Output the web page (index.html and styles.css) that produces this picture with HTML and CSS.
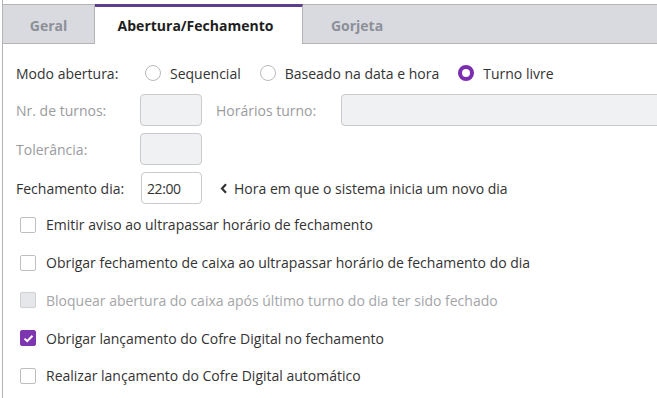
FILE: index.html
```html
<!DOCTYPE html>
<html lang="pt">
<head>
<meta charset="utf-8">
<link rel="stylesheet" href="styles.css">
</head>
<body>
<div class="frame">
  <div class="tabbar">
    <div class="tab">Geral</div>
    <div class="tab active">Abertura/Fechamento</div>
    <div class="tab last">Gorjeta</div>
  </div>
  <div class="content">
    <div class="row row-mode">
      <span class="label">Modo abertura:</span>
      <div class="radios">
        <label class="radio"><span class="dot"></span>Sequencial</label>
        <label class="radio"><span class="dot"></span>Baseado na data e hora</label>
        <label class="radio"><span class="dot checked"></span>Turno livre</label>
      </div>
    </div>
    <div class="row">
      <span class="label disabled">Nr. de turnos:</span>
      <span class="input small dis"></span>
      <span class="label disabled mid">Horários turno:</span>
      <span class="input wide dis"></span>
    </div>
    <div class="row">
      <span class="label disabled">Tolerância:</span>
      <span class="input small dis"></span>
    </div>
    <div class="row last-row">
      <span class="label">Fechamento dia:</span>
      <span class="input small val">22:00</span>
      <span class="hint"><svg class="chev" width="8" height="11" viewBox="0 0 8 11"><path d="M6 1.2 L2 5.5 L6 9.8" fill="none" stroke="#333" stroke-width="2.2"/></svg>Hora em que o sistema inicia um novo dia</span>
    </div>
    <div class="checks">
      <label class="check"><span class="box"></span>Emitir aviso ao ultrapassar horário de fechamento</label>
      <label class="check"><span class="box"></span>Obrigar fechamento de caixa ao ultrapassar horário de fechamento do dia</label>
      <label class="check disabled"><span class="box dis"></span>Bloquear abertura do caixa após último turno do dia ter sido fechado</label>
      <label class="check"><span class="box on"><svg width="11" height="9" viewBox="0 0 11 9"><path d="M1.5 4.6 L4.2 7.2 L9.5 1.8" fill="none" stroke="#fff" stroke-width="2"/></svg></span>Obrigar lançamento do Cofre Digital no fechamento</label>
      <label class="check"><span class="box"></span>Realizar lançamento do Cofre Digital automático</label>
    </div>
  </div>
</div>
</body>
</html>
```

FILE: styles.css
```css
* { box-sizing: border-box; }
html, body {
  margin: 0;
  padding: 0;
  background: #fff;
  overflow: hidden;
}
body {
  font-family: "Open Sans", "Liberation Sans", sans-serif;
  font-size: 14px;
  color: #333;
}
.frame {
  margin-left: 2px;
  border-left: 1px solid #b4b4b6;
  height: 398px;
  padding-top: 4px;
}
.tabbar {
  display: flex;
  height: 40px;
  background: #d9dadf;
  border-top: 1px solid #b4b4b6;
  border-bottom: 1px solid #b4b4b6;
}
.tab {
  display: flex;
  align-items: center;
  justify-content: center;
  font-weight: 700;
  color: #8c9098;
  width: 92px;
  border-right: 1px solid #b4b4b6;
  padding-top: 2px;
}
.tab.active {
  width: 208px;
  background: #fff;
  color: #1e1e1e;
  margin-top: -1px;
  margin-bottom: -1px;
  border-top: 3px solid #5d3e8c;
  padding-top: 0;
  padding-right: 6px;
}
.tab.last {
  width: 108px;
  border-right: none;
}
.content {
  padding: 13px 0 0 13px;
}
.row {
  display: flex;
  align-items: center;
  height: 32px;
  margin-bottom: 7px;
}
.row-mode {
  margin-bottom: 5px;
}
.row.last-row {
  margin-bottom: 0;
}
.label {
  width: 124px;
  flex: none;
}
.label.disabled { color: #9a9b9e; }
.label.mid {
  width: 125px;
  margin-left: 14px;
}
.radios {
  display: flex;
  align-items: center;
  gap: 19px;
  padding-left: 5px;
}
.radio {
  display: flex;
  align-items: center;
  gap: 9px;
}
.dot {
  width: 16px;
  height: 16px;
  border-radius: 50%;
  border: 1px solid #b9b9bc;
  background: #fff;
}
.dot.checked {
  border: 4.5px solid #7a2db0;
}
.input {
  height: 32px;
  border: 1px solid #c9cacd;
  border-radius: 4px;
  flex: none;
}
.input.small { width: 62px; }
.input.dis { background: #f0f1f3; }
.input.wide { width: 340px; }
.input.val {
  background: #fff;
  display: flex;
  align-items: center;
  padding-left: 5px;
  letter-spacing: -0.4px;
  margin-left: 1px;
  width: 61px;
}
.hint {
  display: flex;
  align-items: center;
  margin-left: 18px;
}
.chev { margin-right: 6px; }
.checks {
  padding-top: 2px;
}
.check {
  display: flex;
  align-items: center;
  height: 37.75px;
  gap: 10px;
  padding-left: 4px;
}
.check.disabled { color: #a4a5a8; }
.box {
  width: 16px;
  height: 16px;
  border: 1px solid #bdbec1;
  border-radius: 2px;
  background: #fff;
  display: flex;
  align-items: center;
  justify-content: center;
  flex: none;
}
.box.dis {
  background: #e6e7ea;
  border-color: #d0d1d4;
}
.box.on {
  background: #7e35b0;
  border-color: #7e35b0;
}
```
